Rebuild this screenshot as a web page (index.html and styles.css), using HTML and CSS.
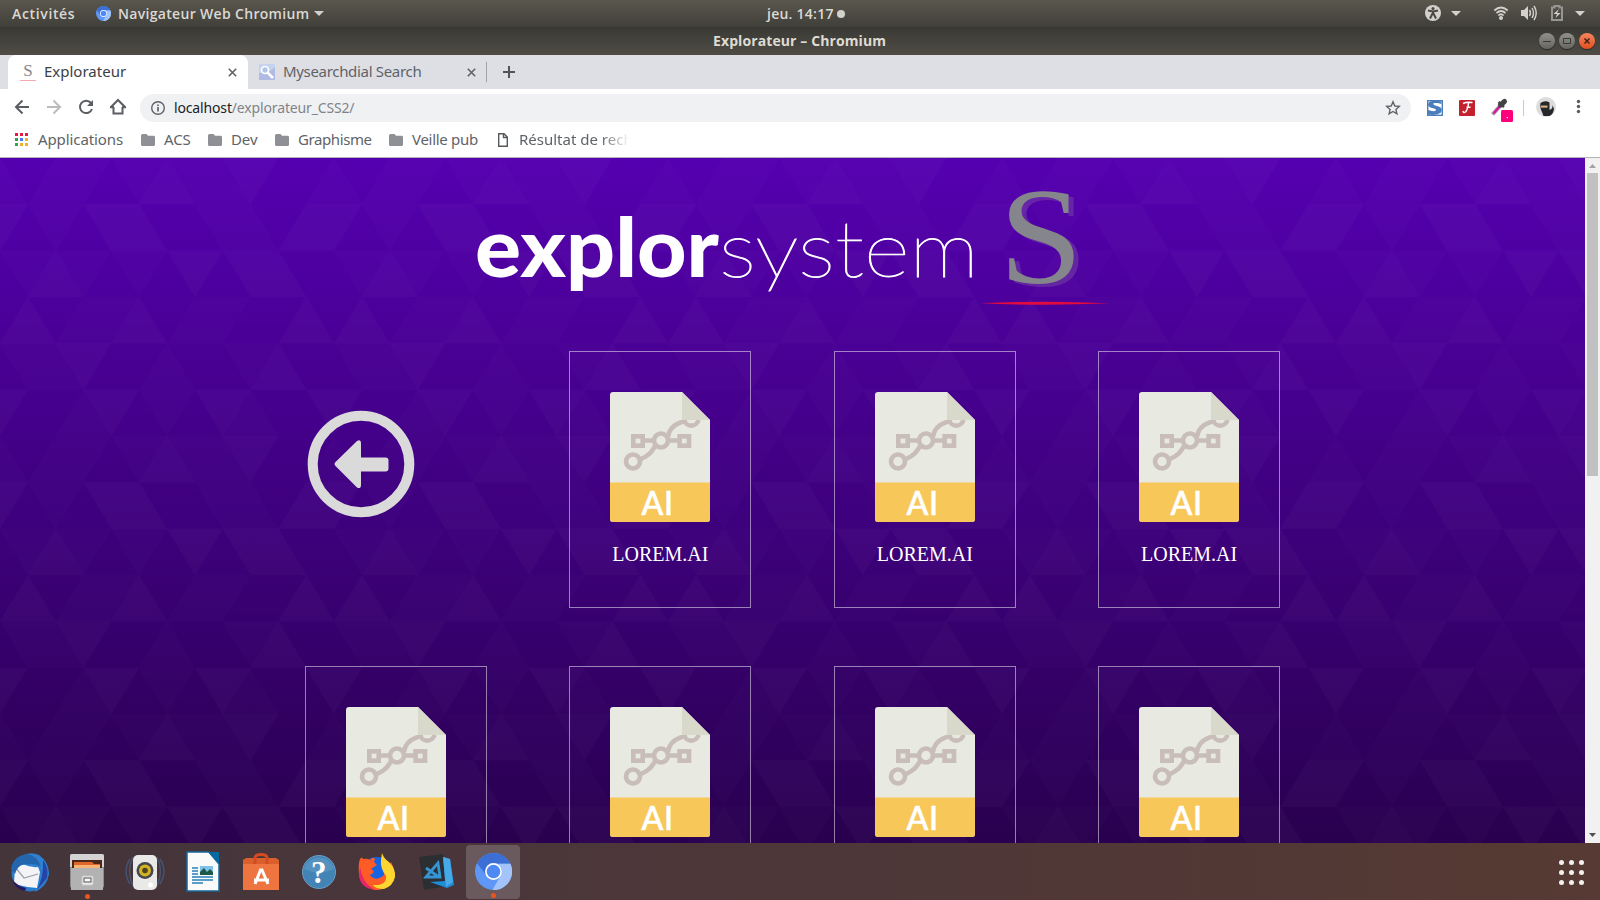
FILE: index.html
```html
<!DOCTYPE html>
<html lang="fr">
<head>
<meta charset="utf-8">
<title>Explorateur</title>
<link rel="stylesheet" href="styles.css">
</head>
<body>
<svg class="defs" width="0" height="0">
  <defs>
    <symbol id="chromium" viewBox="0 0 36 36">
      <circle cx="18" cy="18" r="18" fill="#5f97f6"/>
      <path d="M2 10A18 18 0 0 1 34.500 10.500H18A8 8 0 0 0 10.500 21Z" fill="#3b6fd6"/>
      <path d="M34.500 10.500A18 18 0 0 1 17 36L25.500 21A8 8 0 0 0 22 10.500Z" fill="#a3c4fb"/>
      <circle cx="18" cy="18" r="8.200" fill="#fff"/><circle cx="18" cy="18" r="6.600" fill="#4e8af4"/>
    </symbol>
    <symbol id="folder" viewBox="0 0 14 12"><path d="M0 1.500Q0 0 1.500 0H5.500L7 1.800H12.500Q14 1.800 14 3.200V10.500Q14 12 12.500 12H1.500Q0 12 0 10.500Z" fill="#8f9095"/></symbol>
    <symbol id="file-ai" viewBox="0 0 100 130">
      <path d="M3 0H72L100 28V127Q100 130 97 130H3Q0 130 0 127V3Q0 0 3 0Z" fill="#e8e9e0"/>
      <g fill="none" stroke="#c8bdb8" stroke-width="4.600">
        <circle cx="23" cy="69.500" r="7"/><circle cx="51" cy="48.500" r="7"/><path d="M74 28A7.500 7.500 0 0 0 88.500 28"/>
        <path d="M31 67C42 62 42 58 46 53M58 45C59 35 68 30 77 29M35 48.500H44M58 48.500H68"/>
        <rect x="23.300" y="44.300" width="9.400" height="9.400"/><rect x="69.600" y="44.300" width="9.400" height="9.400"/>
      </g>
      <path d="M72 0V28H100Z" fill="#d8d8cb"/>
      <path d="M0 90.500H100V127Q100 130 97 130H3Q0 130 0 127Z" fill="#f8c759"/>
      <text class="ext" x="31.500" y="123">A</text><text class="ext" x="54" y="123">I</text>
    </symbol>
    <pattern id="tri" width="334" height="278" patternUnits="userSpaceOnUse">
      <g transform="scale(.33333)" fill="#fff">
        <g opacity=".022">
          <path d="M417 139L501 0L585 139ZM668 0H835L752 139Z"/>
          <path d="M251 139H417L334 278ZM417 139L501 278H334ZM-84 139H84L0 278ZM919 139L1002 278H835ZM919 139H1086L1002 278Z"/>
          <path d="M167 278L251 417H84ZM501 278H668L585 417ZM668 278H835L752 417ZM835 278L919 417H752Z"/>
          <path d="M84 417L167 556H0ZM417 417L501 556H334ZM919 417L1002 556H835Z"/>
          <path d="M167 556H334L251 695ZM835 556L919 695H752Z"/>
          <path d="M-84 695H84L0 834ZM251 695H417L334 834ZM585 695H752L668 834ZM919 695H1086L1002 834Z"/>
        </g>
        <g opacity=".011">
          <path d="M167 0L251 139H84ZM167 0H334L251 139ZM501 0H668L585 139ZM334 0H501L417 139ZM1002 0L1086 139H919ZM0 0L84 139H-84ZM668 0L752 139H585Z"/>
          <path d="M84 139H251L167 278ZM585 139H752L668 278ZM752 139L835 278H668Z"/>
          <path d="M0 278H167L84 417ZM167 278H334L251 417ZM334 278H501L417 417Z"/>
          <path d="M251 417L334 556H167ZM251 417H417L334 556ZM585 417L668 556H501ZM585 417H752L668 556Z"/>
          <path d="M0 556H167L84 695ZM668 556H835L752 695ZM167 556L251 695H84ZM501 556L585 695H417Z"/>
          <path d="M251 695L334 834H167ZM417 695H585L501 834ZM752 695L835 834H668Z"/>
        </g>
      </g>
    </pattern>
  </defs>
</svg>

<div class="topbar">
  <span class="activities">Activités</span>
  <svg class="mini-chromium" width="15" height="15"><use href="#chromium"/></svg>
  <span class="appname">Navigateur Web Chromium</span>
  <svg width="10" height="5"><path d="M0 0H10L5 5Z" fill="#d3d1cc"/></svg>
  <span class="clock">jeu. 14:17</span>
  <i class="clock-dot"></i>
  <svg class="status" width="170" height="27" fill="#d3d1cc">
    <circle cx="13" cy="13" r="8"/>
    <g stroke="#4a4841" fill="none"><path d="M8 10.500L13 11.500L18 10.500" stroke-width="1.800"/><path d="M13 11V14M10 18.500L12.300 14H13.700L16 18.500" stroke-width="2"/></g><circle cx="13" cy="8.500" r="1.600" fill="#4a4841"/>
    <path d="M31 11H41L36 16Z"/>
    <g fill="none" stroke="#d3d1cc" stroke-width="1.700"><path d="M74.300 10.500Q81 4.500 87.700 10.500M76.500 13Q81 9 85.500 13M78.300 15.500Q81 13 83.700 15.500"/></g><circle cx="81" cy="18" r="2"/>
    <path d="M101 10H104L108 6V20L104 16H101Z"/><path d="M109.500 10Q111.500 13 109.500 16M112 8Q115 13 112 18M114 6Q118.500 13 114 20" fill="none" stroke="#d3d1cc" stroke-width="1.400"/>
    <path d="M132 7.500H134.500V6H139.500V7.500H142V20H132Z" fill="none" stroke="#969590" stroke-width="2"/><path d="M139 9L133.500 14H137L135.500 18L140.500 13H137Z"/>
    <path d="M155 11H165L160 16Z"/>
  </svg>
</div>
<div class="titlebar">
  <span class="wintitle">Explorateur – Chromium</span>
  <div class="buttons">
    <i class="wbtn"><svg viewBox="0 0 16 16"><path d="M4 8.500H12" stroke="#3b3a36" fill="none"/></svg></i>
    <i class="wbtn"><svg viewBox="0 0 16 16"><path d="M4.500 5.500H11.500V10.500H4.500Z" stroke="#3b3a36" fill="none"/></svg></i>
    <i class="wbtn close"><svg viewBox="0 0 16 16"><path d="M5.500 5.500L10.500 10.500M10.500 5.500L5.500 10.500" stroke="#3f2115" stroke-width="1.500" fill="none"/></svg></i>
  </div>
</div>

<div class="tabs">
  <div class="tab active">
    <span class="favicon">S</span>
    <span class="tab-title t1">Explorateur</span>
    <svg width="9" height="9"><path d="M.8 .8L8.200 8.200M8.200 .8L.8 8.200" stroke="#5f6368" stroke-width="1.600"/></svg>
  </div>
  <div class="tab">
    <svg width="16" height="16"><path d="M0 0H16V16H0Z" fill="#c6d3ef"/><path d="M0 9Q10 9 16 3V16H0Z" fill="#b1bae2"/><circle cx="6" cy="6" r="3.500" fill="#b1c4e9" stroke="#fff" stroke-width="1.700"/><path d="M8.500 8.500L14 14" stroke="#fff" stroke-width="2.500"/></svg>
    <span class="tab-title t2">Mysearchdial Search</span>
    <svg width="9" height="9"><path d="M.8 .8L8.200 8.200M8.200 .8L.8 8.200" stroke="#5f6368" stroke-width="1.600"/></svg>
  </div>
  <i class="tab-sep"></i>
  <svg width="12" height="12"><path d="M6 0V12M0 6H12" stroke="#505357" stroke-width="2"/></svg>
</div>

<div class="toolbar">
  <svg width="140" height="36" fill="none" stroke="#5a5d62" stroke-width="2">
    <path d="M29 18H16.500M22.500 11.500L16 18L22.500 24.500"/>
    <path d="M47 18H59.500M53.500 11.500L60 18L53.500 24.500" stroke="#babcbe"/>
    <path d="M91 14A6.200 6.200 0 1 0 92 20"/><path d="M93 11V17H87Z" fill="#5a5d62" stroke="none"/>
    <path d="M113.500 18V24.500H122.500V18M110.800 18.200L118 11L125.200 18.200M110 18.200H114M122 18.200H126"/>
  </svg>
  <div class="omnibox">
    <svg width="14" height="14"><circle cx="7" cy="7" r="6.300" fill="none" stroke="#5f6368" stroke-width="1.400"/><path d="M7 6V10.500M7 3.500V5.100" stroke="#5f6368" stroke-width="1.700"/></svg>
    <span class="url"><b>localhost</b>/explorateur_CSS2/</span>
    <svg class="star" width="16" height="16"><path d="M8 1.800L9.800 6L14.300 6.400L10.900 9.400L11.900 13.900L8 11.500L4.100 13.900L5.100 9.400L1.700 6.400L6.200 6Z" fill="none" stroke="#5f6368" stroke-width="1.400"/></svg>
  </div>
  <svg class="extensions" width="189" height="36">
    <rect x="16.700" y="11.700" width="14.600" height="14.600" fill="#fff" stroke="#4a7dbc" stroke-width="1.400"/><path d="M30.500 15V12.500Q24 11 19 12.500C15.500 15.500 17 18 21 19C25 20 26 20.500 24 22Q21 22.500 17 21V25.500Q26 27 30 23.500C32 19.500 30 18 26 17C21 15.500 22 14.500 23.500 14Q27 13.500 30.500 15Z" fill="#4a7dbc"/>
    <rect x="48" y="11" width="16" height="16" rx="1" fill="#c4202d"/><path d="M52 14.500Q56 12.500 61.500 13.500M57.500 14Q57 20 54.500 23Q52.500 24.500 52 22M55.500 18.300H59.500" stroke="#fff" stroke-width="1.500" fill="none"/>
    <path d="M81.500 25.500L90 16" stroke="#9fa0a5" stroke-width="4"/><path d="M82.500 24.500L88.500 17.500" stroke="#e0109a" stroke-width="2"/><path d="M87.500 13L93 18" stroke="#414347" stroke-width="2.500"/><path d="M89.500 16L93.500 12.500" stroke="#414347" stroke-width="5" stroke-linecap="round"/>
    <rect x="90" y="21" width="12" height="12" rx="1.500" fill="#ff007c"/><rect x="95.600" y="28" width="1.200" height="1.200" fill="#fff"/>
    <path d="M112.500 11V27" stroke="#cacbcd"/>
    <circle cx="135" cy="18" r="10" fill="#dcdcdc"/><path d="M129.500 14Q134 11 138.500 13.500V21Q142 20 141.500 16L143 20Q142 25.500 138.500 27H132.500L131 23Q128.500 18 129.500 14Z" fill="#25272a"/><path d="M130 16.500H136.500V18.700H130Z" fill="#d8ad7d"/>
    <g fill="#5a5d62"><circle cx="167.500" cy="12.500" r="1.700"/><circle cx="167.500" cy="17.500" r="1.700"/><circle cx="167.500" cy="22.500" r="1.700"/></g>
  </svg>
</div>

<div class="bookmarks">
  <svg width="13" height="13"><path d="M0 0H3V3H0ZM5 0H8V3H5ZM10 0H13V3H10Z" fill="#e8173f"/><path d="M0 5H3V8H0ZM0 10H3V13H0Z" fill="#34a060"/><path d="M5 5H8V8H5Z" fill="#4a78ee"/><path d="M10 5H13V8H10ZM5 10H8V13H5ZM10 10H13V13H10Z" fill="#eeb02d"/></svg>
  <span class="bm b-app">Applications</span>
  <svg width="14" height="12"><use href="#folder"/></svg><span class="bm b-acs">ACS</span>
  <svg width="14" height="12"><use href="#folder"/></svg><span class="bm b-dev">Dev</span>
  <svg width="14" height="12"><use href="#folder"/></svg><span class="bm b-gra">Graphisme</span>
  <svg width="14" height="12"><use href="#folder"/></svg><span class="bm b-vei">Veille pub</span>
  <svg width="10" height="14"><path d="M.7 .7H6L9.300 4V13.300H.7ZM5.500 .7V4.500H9.300" fill="none" stroke="#55585d" stroke-width="1.400"/></svg>
  <span class="bm b-res">Résultat de reche</span>
</div>

<div class="viewport">
  <main class="page">
    <svg class="triangles" width="1585" height="685"><rect width="1585" height="685" fill="url(#tri)"/></svg>
    <header class="brand">
      <svg width="660" height="140" viewBox="470 178 660 140">
        <text class="bold" x="475" y="277" textLength="244" lengthAdjust="spacingAndGlyphs">explor</text>
        <text class="thin" x="719" y="277" textLength="260" lengthAdjust="spacingAndGlyphs">system</text>
        <text class="letter" x="999" y="283" textLength="84" lengthAdjust="spacingAndGlyphs">S</text>
        <path d="M980 303.300Q1045 300 1110 303.300Q1045 306 980 303.300Z" fill="#e20b3d"/>
      </svg>
    </header>
    <section class="files">
      <a class="back"><svg width="108" height="108"><circle cx="54" cy="54" r="48.300" fill="none" stroke="#dadada" stroke-width="10"/><path d="M28.500 52L50 31Q54 29 54 33V47.500H78.500Q81.500 47.500 81.500 50.500V58.500Q81.500 61.500 78.500 61.500H54V75Q54 79.500 50 77.500L28.500 56Q26.500 54 28.500 52Z" fill="#dadada"/></svg></a>
      <a class="card"><svg width="100" height="130"><use href="#file-ai"/></svg><span>LOREM.AI</span></a>
      <a class="card"><svg width="100" height="130"><use href="#file-ai"/></svg><span>LOREM.AI</span></a>
      <a class="card"><svg width="100" height="130"><use href="#file-ai"/></svg><span>LOREM.AI</span></a>
      <a class="card"><svg width="100" height="130"><use href="#file-ai"/></svg></a>
      <a class="card"><svg width="100" height="130"><use href="#file-ai"/></svg></a>
      <a class="card"><svg width="100" height="130"><use href="#file-ai"/></svg></a>
      <a class="card"><svg width="100" height="130"><use href="#file-ai"/></svg></a>
    </section>
  </main>
  <div class="scrollbar">
    <svg width="15" height="15"><path d="M4 10H11L7.500 6Z" fill="#a3a3a3"/></svg>
    <i class="thumb"></i>
    <svg class="down" width="15" height="15"><path d="M4 5H11L7.500 9Z" fill="#505050"/></svg>
  </div>
</div>

<div class="dock">
  <div class="app"><svg width="44" height="44">
    <circle cx="23" cy="23" r="18.500" fill="#2a7acb"/><path d="M10 10Q20 0 32 5Q42 12 42 24Q40 36 28 42L34 20Z" fill="#2f80d0"/><path d="M36 10Q42 18 40 28L30 40Q37 26 36 10Z" fill="#2445a8"/><path d="M8 16L16 14Q24 18 31 17L33 22L30 38Q18 37 7 34Z" fill="#f4f4f6"/><path d="M8 17L17 28L31 24" fill="none" stroke="#9da0ae" stroke-width="1.200"/><path d="M4 19Q6 6 20 4Q30 5 34 17Q28 12 15 15Q10 17 8 24Z" fill="#2366ad"/><path d="M5 29Q10 36 19 38L18 41Q8 39 5 29Z" fill="#291763"/></svg></div>
  <div class="app"><svg width="44" height="44">
    <rect x="5" y="4" width="34" height="34" rx="2" fill="#8c8c8c"/><path d="M7 4H37Q39 4 39 6V17H5V6Q5 4 7 4Z" fill="#d3d3d3"/><rect x="7" y="10" width="30" height="9" fill="#4c2717"/><path d="M9 12H27L29 14H35V19H9Z" fill="#e0672a"/><path d="M9 15H35V19H9Z" fill="#f7b477"/><rect x="6" y="18" width="32" height="22" fill="#b2b2b2"/><rect x="17" y="26" width="11" height="9" rx="1" fill="#ededed" stroke="#c9c9c9"/><rect x="19" y="28" width="7" height="4" fill="#f6f6f6" stroke="#555"/></svg><i class="running"></i></div>
  <div class="app"><svg width="44" height="44">
    <path d="M7 9Q-1 21 7 34M10 7Q3 21 10 36M37 9Q45 21 37 34M34 7Q41 21 34 36" stroke="#47526e" stroke-width="1.500" fill="none"/><rect x="10" y="5" width="24" height="35" rx="5" fill="#e9e9e7"/><circle cx="22" cy="20.500" r="8.500" fill="#45464c"/><circle cx="22" cy="20.500" r="6" fill="#d2b324"/><circle cx="22" cy="20.500" r="2.800" fill="#4b4220"/><circle cx="27.500" cy="35" r="2.500" fill="#fff"/></svg></div>
  <div class="app"><svg width="44" height="44">
    <path d="M6 2H28L38 14V41H6Z" fill="#fafafa" stroke="#17679a" stroke-width="1.500"/><path d="M27 2H38V14Z" fill="#0869a3"/><path d="M11 18H17M11 21H17M11 24H17M11 27H32M11 30H32M11 33H22" stroke="#2781b9" stroke-width="1.500"/><rect x="19" y="16" width="13" height="9" fill="#7ec2e9"/><path d="M19 25V22L23 18L26 22L29 19L32 22V25Z" fill="#1d5948"/></svg></div>
  <div class="app"><svg width="44" height="44">
    <path d="M4 10H40V40H4Z" fill="#ee7540"/><path d="M4 10L7 8H37L40 10V14H4Z" fill="#d95f2c"/><path d="M16 14V8Q16 4.500 22 4.500Q28 4.500 28 8V14" fill="none" stroke="#d54b21" stroke-width="3"/><path d="M16 34L21.500 20H23L29 34M15 30H30" fill="none" stroke="#fff" stroke-width="3"/></svg></div>
  <div class="app"><svg width="44" height="44"><circle cx="22" cy="22" r="16.500" fill="#4384b7" stroke="#699dc5"/><path d="M7 19A15.500 15.500 0 0 1 37 19Q22 26 7 19Z" fill="#5592bf"/><text x="14" y="33" font-family="Liberation Serif, serif" font-weight="700" font-size="31" fill="#fff">?</text></svg></div>
  <div class="app"><svg width="44" height="44">
    <circle cx="22" cy="22" r="15" fill="#1464e3"/><path d="M5 9Q7 6 8 9Q13 8 15 10Q18 6 20 9L19 12L22 15L16 19Q22 22 15 25Q20 32 28 26L36 12Q42 23 37 31Q30 41 20 40Q6 37 4 24Q3 14 5 9Z" fill="#ff5b27"/><path d="M5 17Q7 33 20 40Q5 38 4 25Z" fill="#e92568"/><path d="M27 3Q29 9 34 12Q41 19 40 27Q38 36 29 39Q20 39 18 35Q32 36 31 26Q25 18 26 10Z" fill="#ffd62f"/></svg></div>
  <div class="app"><svg width="44" height="44"><path d="M6 7L30 4L34 36L11 40Z" fill="#2c2e32"/><path d="M30 7L37 9L41 35L34 38L17 32L32 31Z" fill="#1f8dd8"/><path d="M30 7L37 9L40 32L33 37Z" fill="#47a9e7"/><path d="M13 18L26 27M13 27L25 13L27 27Z" fill="none" stroke="#3594d2" stroke-width="2.800"/></svg></div>
  <div class="app current"><svg width="37" height="37"><use href="#chromium"/></svg><i class="running"></i></div>
  <svg class="grid-button" width="25" height="25" fill="#f3f1ef"><circle cx="2.500" cy="2.500" r="2.500"/><circle cx="12.500" cy="2.500" r="2.500"/><circle cx="22.500" cy="2.500" r="2.500"/><circle cx="2.500" cy="12.500" r="2.500"/><circle cx="12.500" cy="12.500" r="2.500"/><circle cx="22.500" cy="12.500" r="2.500"/><circle cx="2.500" cy="22.500" r="2.500"/><circle cx="12.500" cy="22.500" r="2.500"/><circle cx="22.500" cy="22.500" r="2.500"/></svg>
</div>
</body>
</html>
```
FILE: styles.css
```css
* { box-sizing: border-box; }
body { margin: 0; width: 1600px; height: 900px; overflow: hidden; font-family: "Noto Sans", "Open Sans", sans-serif; font-size: 15px; white-space: nowrap; }
svg { display: block; flex: none; }
.defs { position: absolute; }
i { display: block; flex: none; }

.topbar { display: flex; align-items: center; height: 27px; padding-left: 12px; background: linear-gradient(#5a574e, #403f39); color: #dbd9d4; font-weight: 600; font-family: "Open Sans", sans-serif; font-size: 14px; line-height: 27px; }
.activities { width: 84px; letter-spacing: .65px; }
.appname { width: 196px; margin-left: 7px; letter-spacing: .32px; }
.clock { margin-left: 443px; width: 70px; letter-spacing: .25px; padding-bottom: 1px; }
.clock-dot { width: 8px; height: 8px; border-radius: 50%; background: #d3d1cc; }
.status { margin-left: auto; margin-right: 10px; }

.titlebar { display: flex; align-items: center; height: 28px; background: linear-gradient(#393934, #4f4c45); color: #dfdbd2; font-family: "Open Sans", sans-serif; font-weight: 700; font-size: 14px; padding: 0 5px 0 713px; }
.wintitle { letter-spacing: .1px; padding-bottom: 2px; }
.buttons { display: flex; gap: 4px; margin-left: auto; }
.wbtn { width: 16px; height: 16px; border-radius: 50%; background: linear-gradient(#92918a, #66655f); box-shadow: 0 1px 1px #2a2925; }
.wbtn.close { background: linear-gradient(#f68760, #e24e1f); }

.tabs { display: flex; align-items: center; height: 34px; background: #dedfe4; padding-left: 8px; }
.tab { display: flex; align-items: center; height: 34px; width: 239px; padding: 0 11px; color: #5f6368; }
.tab.active { width: 240px; padding: 0 11px 0 12px; background: #fff; border-radius: 8px 8px 0 0; color: #3c4043; }
.favicon { width: 16px; height: 18px; border-bottom: 1px solid #f3a9ad; color: #85878c; font: 17px/16px "Liberation Serif", serif; text-align: center; }
.tab-title { margin-left: 8px; flex: 1; padding-bottom: 2px; }
.t2 { letter-spacing: -.32px; }
.tab-sep { width: 1px; height: 20px; background: #a0a2a6; margin: 0 16px 0 -1px; }

.toolbar { display: flex; align-items: center; height: 36px; background: #fff; }
.omnibox { display: flex; align-items: center; width: 1271px; height: 28px; margin-top: 2px; padding: 0 10px 0 11px; border-radius: 14px; background: #f0f1f3; color: #80848a; font-size: 14px; }
.url { margin-left: 9px; flex: 1; letter-spacing: -.15px; padding-bottom: 2px; }
.url b { font-weight: 400; color: #202124; }

.bookmarks { display: flex; align-items: center; height: 33px; padding: 0 0 3px 15px; background: #fff; border-bottom: 1px solid #b5b2b6; color: #5f6368; }
.bm { margin-left: 10px; padding-bottom: 2px; letter-spacing: -.1px; }
.bm:not(.b-app) { margin-left: 9px; }
.b-app { width: 103px; }
.b-acs { width: 44px; }
.b-dev { width: 44px; }
.b-gra { width: 91px; letter-spacing: -.4px; }
.b-vei { width: 86px; letter-spacing: -.3px; }
.bm.b-res { width: 114px; margin-left: 11px; letter-spacing: 0; -webkit-mask-image: linear-gradient(to right, #000 72%, transparent 97%); mask-image: linear-gradient(to right, #000 72%, transparent 97%); }

.viewport { display: flex; height: 685px; overflow: hidden; }
.page { position: relative; width: 1585px; height: 685px; background: linear-gradient(#5500b0, #29004f); overflow: hidden; }
.triangles { position: absolute; left: 0; top: 0; }
.brand { position: relative; height: 193px; padding: 20px 0 0 470px; }
.bold { font: 900 82px Lato, sans-serif; fill: #fff; }
.thin { font: 100 79px Lato, sans-serif; fill: #fff; stroke: #fff; stroke-width: .9px; }
.letter { font: 138px "Liberation Serif", serif; fill: #84868c; filter: drop-shadow(5px 3px 0 rgba(130, 90, 165, .4)); }
.ext { font: 500 32px Lato, sans-serif; fill: #fff; stroke: #fff; stroke-width: .6px; }
.files { position: relative; display: grid; grid-template-columns: repeat(4, 182px); grid-auto-rows: 257px; gap: 58px 82.400px; padding-left: 305px; }
.back { display: block; padding: 59px 0 0 2px; }
.card { display: flex; flex-direction: column; align-items: center; padding-top: 40px; border: 1px solid rgba(255, 255, 255, .5); color: #fff; font: 20px/24px "Liberation Serif", serif; }
.card span { margin-top: 20px; }

.scrollbar { display: flex; flex-direction: column; width: 15px; height: 685px; background: #f1f1f1; }
.thumb { width: 11px; height: 303px; margin-left: 2px; background: #c1c1c1; }
.down { margin-top: auto; }

.dock { display: flex; align-items: center; height: 57px; background: linear-gradient(to right, #43353a, #4b363a 35%, #563a33); }
.app { position: relative; display: flex; align-items: center; justify-content: center; width: 58px; height: 57px; }
.app.current { width: 54px; height: 54px; margin-left: 2px; border-radius: 4px; background: #6a5a5e; }
.running { position: absolute; left: 50%; bottom: 1px; width: 5px; height: 5px; margin-left: -2.500px; border-radius: 50%; background: #e95420; }
.grid-button { margin: 1px 16px 0 auto; }
```
